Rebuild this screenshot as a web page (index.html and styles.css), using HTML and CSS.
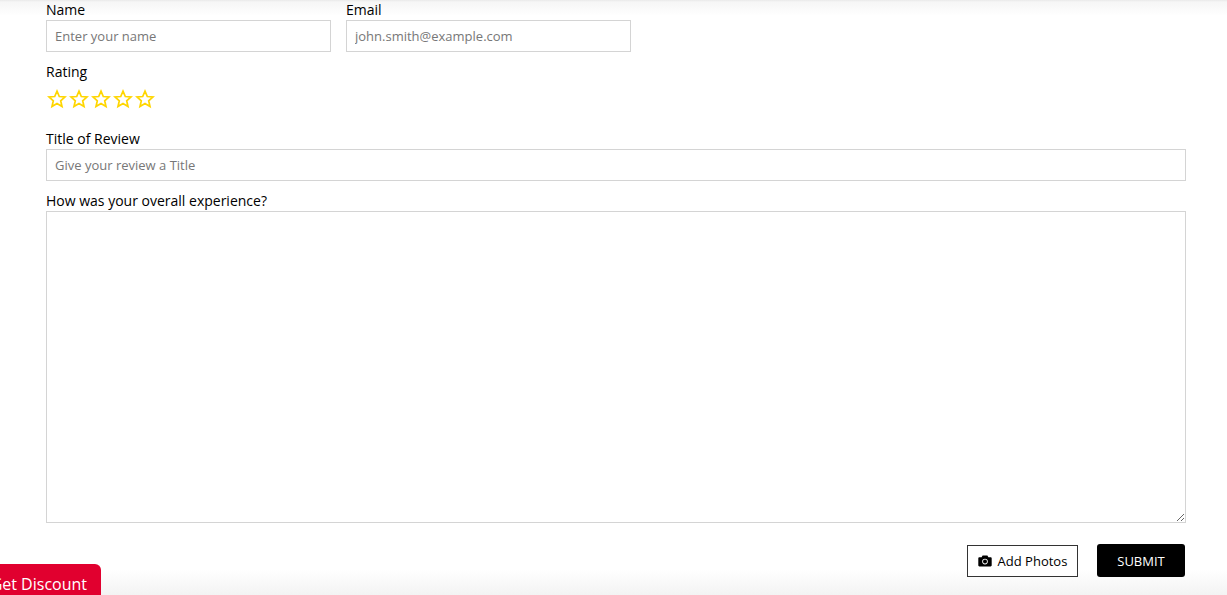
FILE: index.html
```html
<!DOCTYPE html>
<html lang="en">
<head>
<meta charset="utf-8">
<title>Write a review</title>
<link rel="stylesheet" href="styles.css">
</head>
<body>
<div class="shade-top"></div>
<form class="review">
  <div class="heading">Write a Review</div>
  <div class="row">
    <div class="field half">
      <label class="label">Name</label>
      <input class="input" type="text" placeholder="Enter your name">
    </div>
    <div class="field half">
      <label class="label">Email</label>
      <input class="input" type="text" placeholder="john.smith@example.com">
    </div>
  </div>
  <div class="rating">
    <div class="label">Rating</div>
    <div class="stars">
      <svg class="star" viewBox="0 0 20 20"><path d="M10 2.2l2.3 5.3 5.7.5-4.3 3.8 1.3 5.7-5-3-5 3 1.3-5.7L2 8l5.7-.5z"/></svg>
      <svg class="star" viewBox="0 0 20 20"><path d="M10 2.2l2.3 5.3 5.7.5-4.3 3.8 1.3 5.7-5-3-5 3 1.3-5.7L2 8l5.7-.5z"/></svg>
      <svg class="star" viewBox="0 0 20 20"><path d="M10 2.2l2.3 5.3 5.7.5-4.3 3.8 1.3 5.7-5-3-5 3 1.3-5.7L2 8l5.7-.5z"/></svg>
      <svg class="star" viewBox="0 0 20 20"><path d="M10 2.2l2.3 5.3 5.7.5-4.3 3.8 1.3 5.7-5-3-5 3 1.3-5.7L2 8l5.7-.5z"/></svg>
      <svg class="star" viewBox="0 0 20 20"><path d="M10 2.2l2.3 5.3 5.7.5-4.3 3.8 1.3 5.7-5-3-5 3 1.3-5.7L2 8l5.7-.5z"/></svg>
    </div>
  </div>
  <div class="field title-field">
    <label class="label">Title of Review</label>
    <input class="input" type="text" placeholder="Give your review a Title">
  </div>
  <div class="field body-field">
    <label class="label">How was your overall experience?</label>
    <textarea class="textarea"></textarea>
  </div>
  <div class="actions">
    <button class="add-photos" type="button">
      <svg class="camera" viewBox="0 0 14 12"><path fill-rule="evenodd" d="M4.6.6h4.8l1 1.6h2.2c.6 0 1.1.5 1.1 1.1v7c0 .6-.5 1.1-1.1 1.1H1.4c-.6 0-1.1-.5-1.1-1.1v-7c0-.6.5-1.1 1.1-1.1h2.2zM7 3.8a2.8 2.8 0 1 0 0 5.6 2.8 2.8 0 0 0 0-5.6zm0 .8a2 2 0 1 1 0 4 2 2 0 0 1 0-4z"/></svg>
      Add Photos
    </button>
    <button class="submit" type="button">SUBMIT</button>
  </div>
</form>
<div class="shade-bottom"></div>
<div class="discount">Get Discount</div>
</body>
</html>
```
FILE: styles.css
```css
html, body {
  margin: 0;
  height: 595px;
  overflow: hidden;
  background: #fff;
}
body {
  font-family: "Open Sans", sans-serif;
  font-size: 14px;
  color: #000;
  position: relative;
}
.shade-top {
  position: absolute;
  top: 0;
  left: 0;
  right: 0;
  height: 16px;
  background: linear-gradient(#e9e9e9 0, #f6f6f6 2px, rgba(255,255,255,0) 100%);
}
.shade-bottom {
  position: absolute;
  bottom: 0;
  left: 0;
  right: 0;
  height: 25px;
  background: linear-gradient(rgba(243,243,243,0), #f3f3f3);
}
.review {
  position: relative;
  z-index: 1;
  width: 1140px;
  margin-left: 46px;
  display: flex;
  flex-direction: column;
}
.heading {
  height: 19px;
  margin-top: -19px;
  line-height: 19px;
  font-size: 14px;
}
.row {
  display: flex;
  gap: 15px;
}
.field {
  display: flex;
  flex-direction: column;
}
.half {
  width: 285px;
}
.label {
  display: block;
  font-size: 14px;
  line-height: 19px;
  margin-bottom: 1px;
}
.input {
  box-sizing: border-box;
  height: 32px;
  width: 100%;
  border: 1px solid #d4d4d4;
  border-radius: 0;
  padding: 0 8px;
  font: 13px "Open Sans", sans-serif;
  color: #000;
  outline: 0;
  background: #fff;
}
.input::placeholder {
  color: #777;
  opacity: 1;
}
.rating {
  margin-top: 10px;
}
.stars {
  display: flex;
  gap: 2px;
  margin-top: 8px;
  padding-left: 1px;
  height: 22px;
}
.star {
  width: 20px;
  height: 20px;
  fill: #fff;
  stroke: #ffd600;
  stroke-width: 1.7;
}
.title-field {
  margin-top: 18px;
}
.body-field {
  margin-top: 10px;
}
.textarea {
  box-sizing: border-box;
  height: 312px;
  width: 100%;
  border: 1px solid #d4d4d4;
  border-radius: 0;
  display: block;
  outline: 0;
  margin: 0;
}
.actions {
  display: flex;
  justify-content: flex-end;
  align-items: flex-end;
  gap: 19px;
  margin-top: 21px;
  padding-right: 1px;
}
.add-photos {
  box-sizing: border-box;
  width: 111px;
  height: 32px;
  background: #fff;
  border: 1px solid #333;
  border-radius: 0;
  padding: 0;
  font: 13px "Open Sans", sans-serif;
  color: #000;
  display: flex;
  align-items: center;
  justify-content: center;
  gap: 6px;
}
.camera {
  width: 14px;
  height: 12px;
  fill: #000;
}
.submit {
  box-sizing: border-box;
  width: 88px;
  height: 33px;
  background: #000;
  color: #fff;
  border: 0;
  border-radius: 3px;
  padding: 0;
  font: 13px "Open Sans", sans-serif;
}
.discount {
  position: absolute;
  left: -20px;
  bottom: -10px;
  width: 121px;
  height: 41px;
  box-sizing: border-box;
  padding-top: 9px;
  padding-right: 14px;
  text-align: right;
  background: #e1002f;
  color: #fff;
  font-size: 16px;
  line-height: 22px;
  border-radius: 0 6px 0 0;
  z-index: 2;
  white-space: nowrap;
}
```
